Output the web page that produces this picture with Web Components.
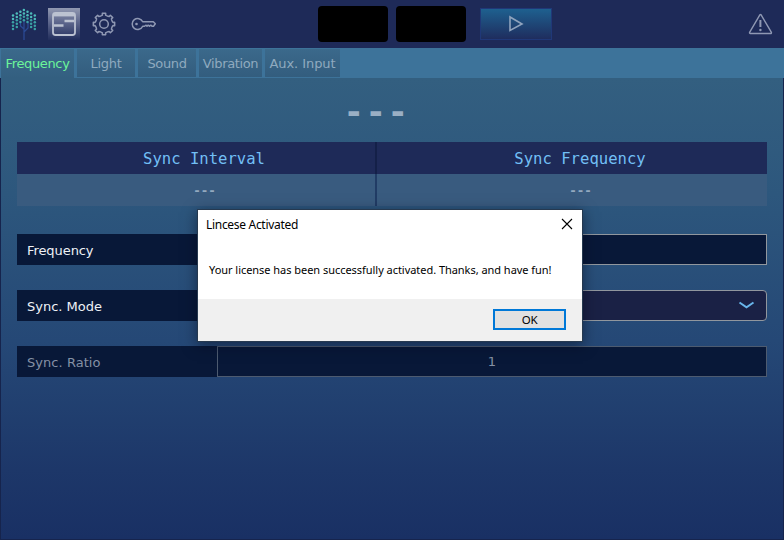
<!DOCTYPE html>
<html lang="en"><head><meta charset="utf-8"><title>License</title>
<style>html,body{margin:0;width:784px;height:540px;overflow:hidden;background:#1e2a58}</style></head>
<body><sync-app></sync-app>
<script>
const define=(name,html,ready)=>customElements.define(name,class extends HTMLElement{
  connectedCallback(){
    if(this.shadowRoot)return;
    const t=document.createElement('template');t.innerHTML=html;
    this.attachShadow({mode:'open'}).append(t.content.cloneNode(true));
    if(ready)ready.call(this,this.shadowRoot);
  }
});

// Label whose letter spacing is adjusted so that the text spans a given width.
define('fit-text','<style>:host{display:inline-block;white-space:pre}span{display:inline-block}</style><span></span>',function(r){
  const s=r.querySelector('span'),w=+this.getAttribute('span');
  s.textContent=this.getAttribute('text');
  const natural=s.getBoundingClientRect().width;
  if(w)s.style.letterSpacing=((w-natural)/s.textContent.length)+'px';
});

define('tree-icon','<style>:host{display:block;width:28px;height:34px}</style><svg width="28" height="34" viewBox="10 6 28 34"><path d="M24 39V31M24 31V19M24 31L28 27V21M24 28L20.500 25V21" fill="none" stroke="#2b4a94" stroke-width="1.300"/><g></g></svg>',function(r){
  const cols=[[13,14.5,5],[16.8,12.5,5],[20.4,10.8,4],[23.9,9,4],[27.5,10.8,4],[31.1,12.5,5],[34.8,14.5,5]];
  const g=r.querySelector('g');
  for(const [x,y,n] of cols)for(let i=0;i<n;i++){
    const c=document.createElementNS('http://www.w3.org/2000/svg','circle');
    c.setAttribute('cx',x);c.setAttribute('cy',y+i*3.4);c.setAttribute('r',1.25);
    c.setAttribute('fill',i<2?'#4ebdbb':'#3ba3a5');g.append(c);
  }
});

define('panel-icon',`<style>:host{display:block;width:32px;height:32px;background:linear-gradient(#9198b1,#5d668c 45%,#222e5c)}svg{display:block}</style>
<svg width="32" height="32" fill="none" stroke="#bcc2d1"><rect x="5" y="5" width="22" height="22" rx="2.500" stroke-width="1.800"/><path d="M5 7h22" stroke-width="2.800"/><path d="M16.500 13H26M6 17.500h9.500" stroke-width="2.400"/></svg>`);

define('gear-icon',`<style>:host{display:block;width:24px;height:24px}svg{display:block}</style>
<svg width="24" height="24" fill="none" stroke="#8f98b3" stroke-width="1.500" stroke-linejoin="round"><circle cx="12" cy="12" r="4.300"/><path/></svg>`,function(r){
  let d='';
  for(let i=0;i<8;i++)for(const [o,q] of [[-17,8.7],[-10,9.1],[-9,10.8],[9,10.8],[10,9.1],[17,8.7]]){
    const a=(i*45+o)*Math.PI/180;
    d+=(d?'L':'M')+(12+q*Math.sin(a)).toFixed(2)+' '+(12-q*Math.cos(a)).toFixed(2);
  }
  r.querySelector('path').setAttribute('d',d+'Z');
});

define('key-icon',`<style>:host{display:block;width:26px;height:14px}svg{display:block}</style>
<svg width="26" height="14" fill="none" stroke="#8f98b3" stroke-width="1.500" stroke-linejoin="round"><path d="M11.700 4.700H22.300L24.300 6.700L22.500 9.200H21L19.800 8.200L18.500 9.200L17.200 8.200L16 9.200L14.800 8.200L13.500 9.300H11.700A5.500 5.500 0 1 1 11.700 4.700Z"/><circle cx="5.500" cy="7" r="1.300" fill="#8f98b3" stroke="none"/></svg>`);

define('top-bar',`<style>
:host{display:flex;align-items:center;height:48px;box-sizing:border-box;background:#1e2a58;padding:0 11px 0 10px}
panel-icon{margin-left:10px}gear-icon{margin-left:12px}key-icon{margin-left:15px}
.box{width:70px;height:36px;border-radius:4px;background:#000}
.a{margin-left:161px}.b{margin-left:8px}
.play{margin-left:14px;width:72px;height:32px;box-sizing:border-box;border:1px solid #203878;background:linear-gradient(#1e608f,#1f2d5e);display:flex;align-items:center;justify-content:center}
.warn{margin-left:auto}svg{display:block}
</style>
<tree-icon></tree-icon><panel-icon></panel-icon><gear-icon></gear-icon><key-icon></key-icon>
<div class="box a"></div><div class="box b"></div>
<div class="play"><svg width="16" height="18" fill="none" stroke="#8fa3bd" stroke-width="1.600"><path d="M2 2V15.500L14 9Z"/></svg></div>
<svg class="warn" width="26" height="24" fill="none" stroke="#8f98b3" stroke-width="1.400" stroke-linejoin="round"><path d="M13 2.700Q13.500 2.200 14 2.700L24.400 20.400Q24.600 21.500 23.600 21.500H3.300Q2.300 21.500 2.600 20.400Z"/><path d="M13.400 8V15" stroke-width="2"/><circle cx="13.400" cy="18" r="1.200" fill="#8f98b3" stroke="none"/></svg>`);

define('tab-item',`<style>
:host{display:flex;box-sizing:border-box;height:28px;margin-top:1px;align-items:center;justify-content:center;background:linear-gradient(#3b698b,#335d7e);color:#8faabf;font:13px "DejaVu Sans",sans-serif;padding-top:1px}
:host([active]){height:29px;background:linear-gradient(#3b698b,#335f80);color:#6cf59a;padding-top:0}
</style><slot></slot>`);

define('tab-strip',`<style>
:host{display:grid;grid-template-columns:73px 58px 58px 63px 75px;column-gap:3px;height:30px;box-sizing:border-box;padding-left:1px;background:#3d739a;align-items:start}
</style>
<tab-item active><fit-text span="64" text="Frequency"></fit-text></tab-item><tab-item><fit-text span="31" text="Light"></fit-text></tab-item><tab-item><fit-text span="39" text="Sound"></fit-text></tab-item><tab-item><fit-text span="55.5" text="Vibration"></fit-text></tab-item><tab-item><fit-text span="66" text="Aux. Input"></fit-text></tab-item>`);

define('sync-table',`<style>
:host{display:grid;grid-template-columns:358px 2px 390px;grid-template-rows:32px 32px;width:750px}
div{display:flex;align-items:center;justify-content:center;box-sizing:border-box}
.h{background:#1e2a58;color:#72bff5;font:15.600px "DejaVu Sans Mono",monospace;padding:1px 0 0 16px}
.v{background:#395b7f;color:#93a9bf}
.s{background:#142048}.t{background:#213c65}
</style>
<div class="h"><fit-text span="122" text="Sync Interval"></fit-text></div><div class="s"></div><div class="h"><fit-text span="131.500" text="Sync Frequency"></fit-text></div>
<div class="v"><dash-text></dash-text></div><div class="t"></div><div class="v"><dash-text></dash-text></div>`);

define('dash-text',`<style>:host{display:block;font:bold 12.500px "DejaVu Sans Mono",monospace;padding-left:17px}</style><fit-text span="22.5" text="---"></fit-text>`);

define('setting-row',`<style>
:host{display:grid;grid-template-columns:200px 550px;height:31px;color:#eef1f6;font:13px "DejaVu Sans",sans-serif}
.l{display:flex;align-items:center;background:#081838;padding:2px 0 0 10px;box-sizing:border-box}
.f{display:flex;align-items:center;justify-content:center;box-sizing:border-box;border:1px solid #91979e;background:#081838}
:host([combo]) .f{background:#1a2145;border-radius:4px;justify-content:flex-end;padding-right:11px}
:host([off]){color:#8490a5}:host([off]) .f{border-color:#4d5b70}
</style><div class="l"><slot name="label"></slot></div><div class="f"><slot></slot></div>`);

define('chevron-icon','<style>:host,svg{display:block}</style><svg width="17" height="9" fill="none" stroke="#68b5ea" stroke-width="2"><path d="M1.500 1.500L8.500 6.300L15.500 1.500"/></svg>');

define('message-box',`<style>
:host{display:flex;flex-direction:column;box-sizing:border-box;width:386px;height:133px;border:1px solid #26394f;background:#fff;color:#000;font:12px "Noto Sans","Open Sans",sans-serif;box-shadow:0 3px 13px rgba(0,8,24,.5)}
.t{display:flex;align-items:center;justify-content:space-between;height:28px;padding:0 9px 0 8px;margin-bottom:2px}
.m{flex:1;padding:20px 0 0 11px;font-size:11px;line-height:20px}
.b{height:42px;box-sizing:border-box;background:#f0f0f0;display:flex;justify-content:flex-end;padding:10px 16px 0 0}
button{width:73px;height:21px;box-sizing:border-box;border:2px solid #0078d7;background:#e1e1e1;color:#000;padding:0;font:11.500px/17px "Noto Sans","Open Sans",sans-serif}
</style>
<div class="t"><fit-text span="92" text="Lincese Activated"></fit-text><svg width="12" height="12" stroke="#000" stroke-width="1.100"><path d="M1 1L11 11M11 1L1 11"/></svg></div>
<div class="m"><fit-text span="342.500" text="Your license has been successfully activated. Thanks, and have fun!"></fit-text></div>
<div class="b"><button><fit-text span="15.500" text="OK"></fit-text></button></div>`);

define('sync-app',`<style>
:host{display:block;width:784px;height:540px;position:relative;overflow:hidden}
main{box-sizing:border-box;height:462px;padding:0 16px;border:1px solid #16244d;border-top:0;background:linear-gradient(#335f80,#2d577d 25%,#254876 57%,#1d3769 85%,#193064);display:flex;flex-direction:column;align-items:flex-start}
.big{height:64px;align-self:stretch;display:flex;align-items:center;justify-content:center;color:#9aafc4;font:bold 34px "DejaVu Sans Mono",monospace;box-sizing:border-box;padding:2px 31px 0 0}
setting-row{margin-top:25px}.first{margin-top:28px}
message-box{position:absolute;left:197px;top:209px}
</style>
<top-bar></top-bar><tab-strip></tab-strip>
<main><div class="big"><fit-text span="66" text="---"></fit-text></div>
<sync-table></sync-table>
<setting-row class="first"><fit-text slot="label" span="66.500" text="Frequency"></fit-text></setting-row>
<setting-row combo><fit-text slot="label" span="75" text="Sync. Mode"></fit-text><chevron-icon></chevron-icon></setting-row>
<setting-row off><fit-text slot="label" span="73.500" text="Sync. Ratio"></fit-text><span>1</span></setting-row></main>
<message-box></message-box>`);
</script></body></html>
